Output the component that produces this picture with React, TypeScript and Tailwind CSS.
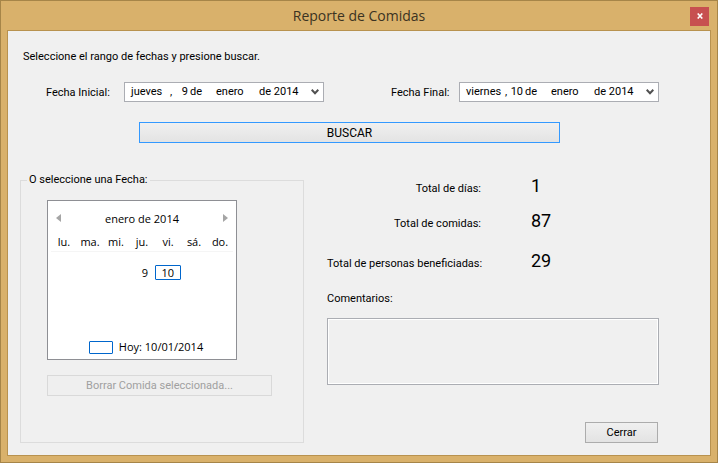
import { useState } from 'react';

interface DateValue {
  weekday: string;
  day: string;
  month: string;
  year: string;
}

const startDate: DateValue = { weekday: 'jueves', day: '9', month: 'enero', year: '2014' };
const endDate: DateValue = { weekday: 'viernes', day: '10', month: 'enero', year: '2014' };

const weekdays = ['lu.', 'ma.', 'mi.', 'ju.', 'vi.', 'sá.', 'do.'];

const totals = [
  { label: 'Total de días:', value: 1 },
  { label: 'Total de comidas:', value: 87 },
  { label: 'Total de personas beneficiadas:', value: 29 },
];

interface DatePickerProps {
  id: string;
  label: string;
  labelWidth: string;
  value: DateValue;
}

function DatePicker({ id, label, labelWidth, value }: DatePickerProps) {
  return (
    <div className="flex items-center gap-2.5">
      <label htmlFor={id} className={`shrink-0 pt-0.5 whitespace-nowrap ${labelWidth}`}>
        {label}
      </label>
      <button
        id={id}
        type="button"
        aria-haspopup="dialog"
        className="flex h-5 w-[200px] items-center border border-[#abadb3] bg-white pr-1 pl-1.5 text-left"
      >
        <span className="w-[39px]">{value.weekday}</span>
        <span className="w-1">,</span>
        <span className="w-3.5 text-right">{value.day}</span>
        <span className="w-7 pl-0.5">de</span>
        <span className="w-[43px]">{value.month}</span>
        <span className="flex-1 whitespace-nowrap">de {value.year}</span>
        <svg viewBox="0 0 8 6" className="h-1.5 w-2" fill="none" stroke="#505050" strokeWidth="2">
          <path d="M0.7 0.8 L4 4.2 L7.3 0.8" />
        </svg>
      </button>
    </div>
  );
}

function Calendar() {
  const [selected, setSelected] = useState(10);

  return (
    <div className="flex h-40 w-[190px] flex-col border border-[#8e8f94] bg-white px-[3px] pt-2 font-['Open_Sans',sans-serif] leading-4">
      <div className="flex items-center justify-between px-[5px]">
        <button type="button" aria-label="Mes anterior" className="flex h-4 w-2 items-center">
          <svg viewBox="0 0 5 8" className="h-2 w-[5px]" fill="#a5a5a5">
            <path d="M5 0 V8 L0 4 Z" />
          </svg>
        </button>
        <span className="pt-0.5">enero de 2014</span>
        <button type="button" aria-label="Mes siguiente" className="flex h-4 w-2 items-center justify-end">
          <svg viewBox="0 0 5 8" className="h-2 w-[5px]" fill="#a5a5a5">
            <path d="M0 0 V8 L5 4 Z" />
          </svg>
        </button>
      </div>
      <table className="mt-1.5 w-full table-fixed border-collapse">
        <thead>
          <tr className="border-b border-[#f5f5f5]">
            {weekdays.map((name) => (
              <th key={name} className="h-[18px] p-0 text-center font-normal">
                {name}
              </th>
            ))}
          </tr>
        </thead>
        <tbody>
          <tr>
            <td colSpan={7} className="h-3.5 p-0" />
          </tr>
          <tr>
            <td colSpan={3} className="p-0" />
            {[9, 10].map((day) => (
              <td key={day} className="p-0">
                <button
                  type="button"
                  onClick={() => setSelected(day)}
                  className={`block h-[15px] w-full rounded-[1px] border pr-1.5 text-right leading-3 ${
                    selected === day ? 'border-[#0066cc]' : 'border-transparent'
                  }`}
                >
                  {day}
                </button>
              </td>
            ))}
            <td colSpan={2} className="p-0" />
          </tr>
        </tbody>
      </table>
      <button type="button" className="mx-auto mt-auto mb-1 flex items-center gap-1.5 pl-2">
        <span className="h-[13px] w-6 rounded-[1px] border border-[#0066cc]" />
        <span>Hoy: 10/01/2014</span>
      </button>
    </div>
  );
}

export default function App() {
  const [comments, setComments] = useState('');

  return (
    <div className="flex min-h-screen flex-col border border-[#a68548] bg-[#d9b16b] px-1.5 pb-1.5 font-[Roboto,sans-serif] text-[11px] leading-4 text-black">
      <header className="grid grid-cols-[1fr_auto_1fr] items-center pt-px">
        <h1 className="col-start-2 font-['Open_Sans',sans-serif] text-[14px] leading-7 text-[#3b3322]">
          Reporte de Comidas
        </h1>
        <button
          type="button"
          aria-label="Cerrar ventana"
          className="mr-0.5 flex h-[19px] w-[19px] items-center justify-center justify-self-end bg-[#c75050]"
        >
          <svg viewBox="0 0 6 6" className="h-1.5 w-1.5" stroke="#fff" strokeWidth="1.6">
            <path d="M0.7 0.5 L5.3 5.5 M5.3 0.5 L0.7 5.5" />
          </svg>
        </button>
      </header>

      <main className="flex flex-1 flex-col border border-[#b8924f] bg-[#f0f0f0] pt-[18px] pr-[51px] pb-3 pl-3">
        <p className="pl-[3px]">Seleccione el rango de fechas y presione buscar.</p>

        <div className="mt-[17px] flex justify-between pl-[26px]">
          <DatePicker id="fecha-inicial" label="Fecha Inicial:" labelWidth="w-[68px]" value={startDate} />
          <DatePicker id="fecha-final" label="Fecha Final:" labelWidth="w-[58px]" value={endDate} />
        </div>

        <button
          type="button"
          className="mt-5 mr-[99px] ml-[119px] h-[21px] border border-[#3399ff] bg-linear-to-b from-[#f0f0f0] to-[#e3e3e3] text-[12px]"
        >
          BUSCAR
        </button>

        <div className="mt-[29px] flex flex-1 gap-[23px]">
          <fieldset className="w-[284px] shrink-0 border border-[#dcdcdc] pl-[26px]">
            <legend className="-ml-5 px-0.5">O seleccione una Fecha:</legend>
            <div className="pt-3">
              <Calendar />
              <button
                type="button"
                disabled
                className="mt-[15px] h-[21px] w-[225px] border border-[#d9d9d9] bg-[#efefef] text-[#a0a0a0]"
              >
                Borrar Comida seleccionada...
              </button>
            </div>
          </fieldset>

          <div className="flex flex-1 flex-col">
            <dl className="flex flex-col gap-[13px] pt-[3px]">
              {totals.map((total) => (
                <div key={total.label} className="flex h-[22px] items-center last:mt-[5px]">
                  <dt className="w-[154px] pt-1.5 text-right whitespace-nowrap">{total.label}</dt>
                  <dd className="ml-[50px] text-[18px]">{total.value}</dd>
                </div>
              ))}
            </dl>
            <label htmlFor="comentarios" className="mt-[19px]">
              Comentarios:
            </label>
            <textarea
              id="comentarios"
              value={comments}
              onChange={(e) => setComments(e.target.value)}
              className="mt-[11px] h-[67px] resize-none border border-[#abadb3] bg-[#f0f0f0] p-1 shadow-[inset_0_0_0_1px_#fff]"
            />
            <button
              type="button"
              className="mt-auto mr-px h-[21px] w-[73px] self-end border border-[#acacac] bg-linear-to-b from-[#f0f0f0] to-[#e3e3e3]"
            >
              Cerrar
            </button>
          </div>
        </div>
      </main>
    </div>
  );
}
